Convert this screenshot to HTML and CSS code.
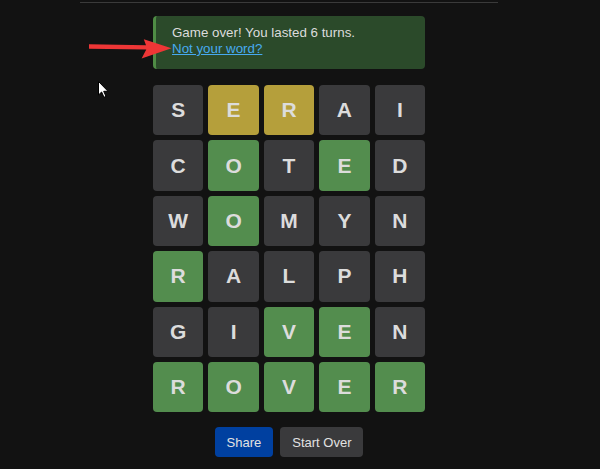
FILE: index.html
```html
<!DOCTYPE html>
<html lang="en">
<head>
<meta charset="utf-8">
<title>Wordle</title>
<link rel="stylesheet" href="styles.css">
</head>
<body>
<div class="page">
  <div class="topbar"></div>
  <main class="game">
    <div class="alert">
      <div class="alert-text">Game over! You lasted 6 turns.</div>
      <a class="alert-link" href="#">Not your word?</a>
    </div>
    <div class="board">
      <div class="tile absent">S</div><div class="tile present">E</div><div class="tile present">R</div><div class="tile absent">A</div><div class="tile absent">I</div>
      <div class="tile absent">C</div><div class="tile correct">O</div><div class="tile absent">T</div><div class="tile correct">E</div><div class="tile absent">D</div>
      <div class="tile absent">W</div><div class="tile correct">O</div><div class="tile absent">M</div><div class="tile absent">Y</div><div class="tile absent">N</div>
      <div class="tile correct">R</div><div class="tile absent">A</div><div class="tile absent">L</div><div class="tile absent">P</div><div class="tile absent">H</div>
      <div class="tile absent">G</div><div class="tile absent">I</div><div class="tile correct">V</div><div class="tile correct">E</div><div class="tile absent">N</div>
      <div class="tile correct">R</div><div class="tile correct">O</div><div class="tile correct">V</div><div class="tile correct">E</div><div class="tile correct">R</div>
    </div>
    <div class="actions">
      <button class="btn btn-share">Share</button>
      <button class="btn btn-restart">Start Over</button>
    </div>
  </main>
  <svg class="annot-arrow" width="90" height="30" viewBox="85 34 90 30">
    <polygon fill="#ee3636" points="89,44.3 146,45.2 143.8,39.2 171.5,48.2 141.6,58.6 146.3,49.6 89,48.8"/>
  </svg>
  <svg class="cursor" width="12" height="18" viewBox="0 0 12 18">
    <path d="M0.5 0.5 L0.5 14 L3.6 11 L6 16.3 L8 15.4 L5.7 10.3 L10 10.3 Z" fill="#fff" stroke="#000" stroke-width="1"/>
  </svg>
</div>
</body>
</html>
```
FILE: styles.css
```css
html, body {
  margin: 0;
  padding: 0;
  background: #121212;
}
body {
  font-family: "Liberation Sans", Arial, sans-serif;
  color: #dcdcdc;
}
.page {
  position: relative;
  width: 578px;
  height: 469px;
  overflow: hidden;
}
.topbar {
  width: 418px;
  margin: 0 auto;
  height: 2px;
  border-bottom: 1px solid #3a3a3a;
}
.game {
  width: 272px;
  margin: 13px auto 0;
  display: flex;
  flex-direction: column;
}
.alert {
  box-sizing: border-box;
  height: 53px;
  background: #2b4a2a;
  border-left: 3px solid #4f8c45;
  border-radius: 4px;
  padding: 9px 15px 12px 16px;
  font-size: 13.33px;
  line-height: 16px;
  display: flex;
  flex-direction: column;
  align-items: flex-start;
}
.alert-text {
  color: #dcdcdc;
}
.alert-link {
  color: #47aaf0;
  text-decoration: underline;
}
.board {
  margin-top: 16px;
  display: grid;
  grid-template-columns: repeat(5, 1fr);
  column-gap: 5px;
  row-gap: 5px;
}
.tile {
  aspect-ratio: 1 / 1;
  border-radius: 4px;
  display: flex;
  align-items: center;
  justify-content: center;
  font-size: 21px;
  font-weight: bold;
  color: #dcdcdc;
}
.absent { background: #3a3a3c; }
.present { background: #b59f3b; }
.correct { background: #538d4e; }
.actions {
  margin-top: 15px;
  display: flex;
  justify-content: center;
  gap: 7px;
}
.btn {
  height: 30px;
  padding: 0 12px;
  border: none;
  border-radius: 4px;
  font-family: "Liberation Sans", Arial, sans-serif;
  font-size: 13px;
  color: #e2e2e2;
}
.btn-share { background: #0040a0; }
.btn-restart { background: #3a3a3c; }
.annot-arrow {
  position: absolute;
  left: 85px;
  top: 34px;
}
.cursor {
  position: absolute;
  left: 98px;
  top: 81px;
}
```
